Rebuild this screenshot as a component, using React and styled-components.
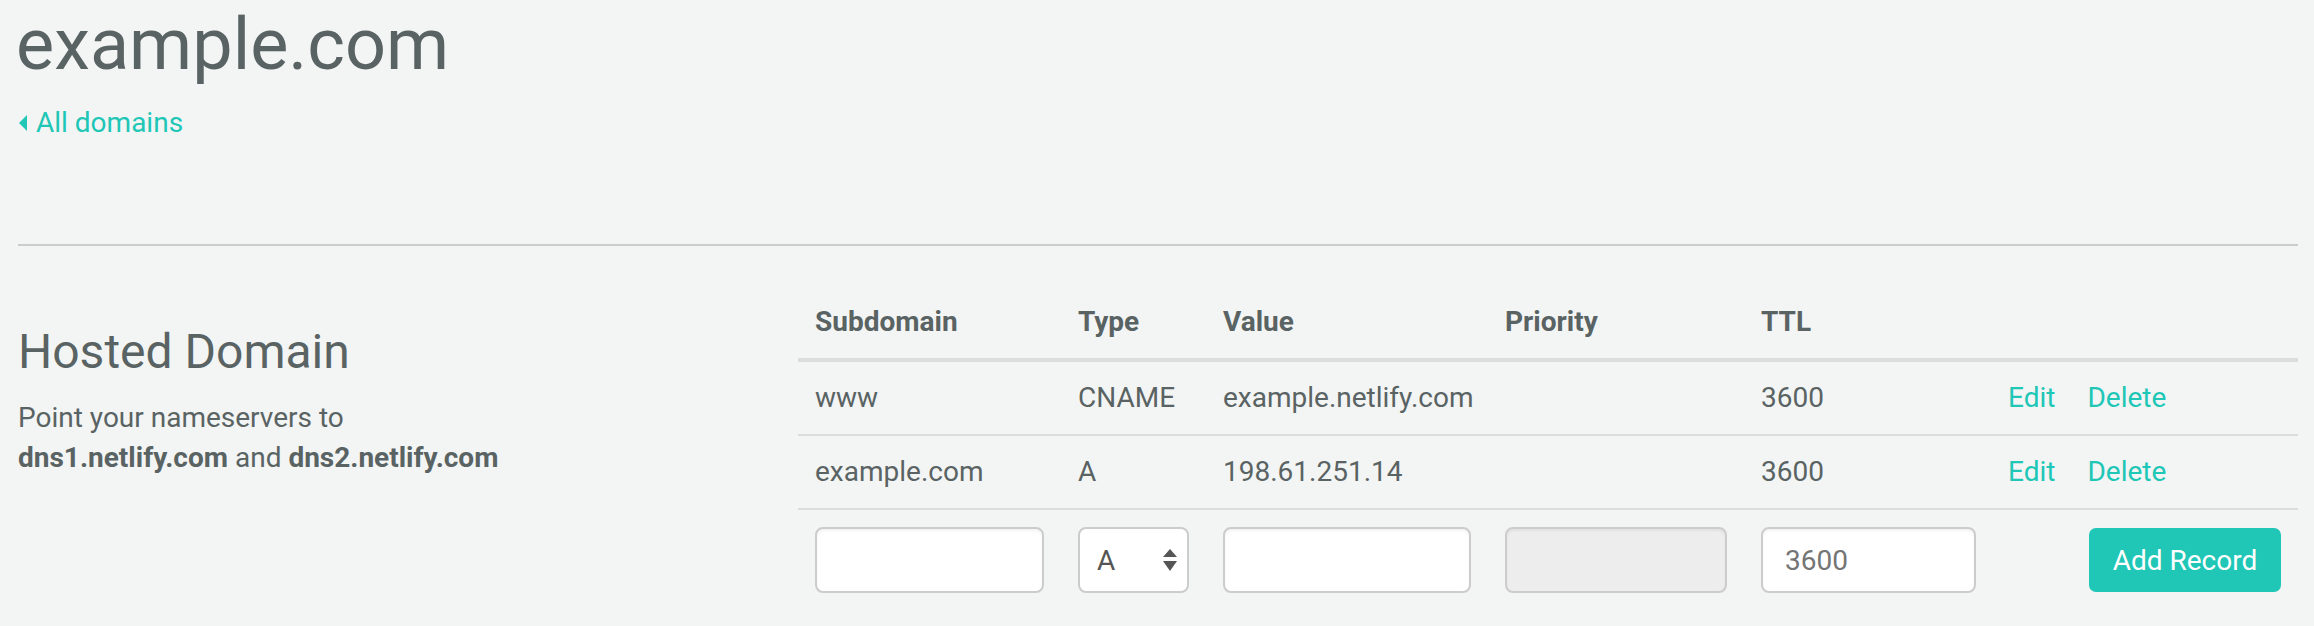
import React from 'react';
import styled, { createGlobalStyle } from 'styled-components';

const GlobalStyle = createGlobalStyle`
    body {
        margin: 0;
        background: #f3f5f4;
        font-family: Roboto, "Liberation Sans", sans-serif;
        color: #5a6363;
    }
`;

const Page = styled.div`
    padding: 2px 16px 0 18px;
`;

const Title = styled.h1`
    margin: 0 0 0 -2px;
    font-size: 72px;
    font-weight: 400;
    line-height: 86px;
    color: #5a6363;
`;

const BackLink = styled.a`
    display: inline-flex;
    align-items: center;
    gap: 9px;
    margin-top: 15px;
    font-size: 28px;
    line-height: 40px;
    color: #20c6b6;
    text-decoration: none;
    cursor: pointer;

    svg {
        margin-left: 1px;
    }
`;

const Divider = styled.hr`
    margin: 101px 0 0;
    border: 0;
    height: 2px;
    background: #cbcdcc;
`;

const Section = styled.section`
    display: grid;
    grid-template-columns: 780px 1fr;
    margin-top: 40px;
`;

const Intro = styled.div`
    padding-top: 38px;

    h2 {
        margin: 0;
        font-size: 48px;
        font-weight: 400;
        line-height: 56px;
    }

    p {
        margin: 18px 0 0;
        font-size: 28px;
        line-height: 40px;
    }

    strong {
        font-weight: 700;
    }
`;

const Table = styled.table`
    width: 100%;
    table-layout: fixed;
    border-collapse: collapse;
    font-size: 28px;
    line-height: 40px;

    th {
        padding: 16px 17px;
        text-align: left;
        font-weight: 700;
        border-bottom: 4px solid #dddddd;
    }

    td {
        padding: 16px 17px;
        border-bottom: 2px solid #dddddd;
        white-space: nowrap;
    }

    tr:last-child td {
        border-bottom: 0;
        padding-top: 17px;
        vertical-align: middle;
    }
`;

const Actions = styled.div`
    display: flex;
    gap: 32px;
    margin-left: -2px;

    a {
        color: #20c6b6;
        cursor: pointer;
    }
`;

const Field = styled.input`
    box-sizing: border-box;
    display: block;
    width: 100%;
    height: 66px;
    padding: 0 22px;
    border: 2px solid #cccccc;
    border-radius: 8px;
    background: ${(p) => (p.disabled ? '#ededed' : '#ffffff')};
    box-shadow: inset 0 2px 3px rgba(0, 0, 0, 0.05);
    font: 28px Roboto, "Liberation Sans", sans-serif;
    color: #757575;
`;

const SelectWrap = styled.div`
    position: relative;

    svg {
        position: absolute;
        right: 12px;
        top: 22px;
        pointer-events: none;
    }
`;

const Select = styled.select`
    box-sizing: border-box;
    display: block;
    width: 100%;
    height: 66px;
    padding: 0 17px;
    border: 2px solid #cccccc;
    border-radius: 8px;
    background: #ffffff;
    appearance: none;
    font: 28px Roboto, "Liberation Sans", sans-serif;
    color: #555555;
`;

const AddButton = styled.button`
    display: block;
    margin-left: auto;
    width: 192px;
    height: 64px;
    border: 0;
    border-radius: 7px;
    background: #20c6b6;
    color: #ffffff;
    font: 28px Roboto, "Liberation Sans", sans-serif;
    cursor: pointer;
`;

const records = [
    { name: 'www', type: 'CNAME', value: 'example.netlify.com', ttl: 3600 },
    { name: 'example.com', type: 'A', value: '198.61.251.14', ttl: 3600 },
];

const App = () => {
    return (
        <Page>
            <GlobalStyle />
            <Title>example.com</Title>
            <BackLink>
                <svg width="8" height="16" viewBox="0 0 8 16">
                    <path d="M8 0 L0 8 L8 16 Z" fill="#20c6b6" />
                </svg>
                All domains
            </BackLink>
            <Divider />
            <Section>
                <Intro>
                    <h2>Hosted Domain</h2>
                    <p>
                        Point your nameservers to<br />
                        <strong>dns1.netlify.com</strong> and <strong>dns2.netlify.com</strong>
                    </p>
                </Intro>
                <Table>
                    <colgroup>
                        <col style={{ width: 263 }} />
                        <col style={{ width: 145 }} />
                        <col style={{ width: 282 }} />
                        <col style={{ width: 256 }} />
                        <col style={{ width: 249 }} />
                        <col />
                    </colgroup>
                    <thead>
                        <tr>
                            <th>Subdomain</th>
                            <th>Type</th>
                            <th>Value</th>
                            <th>Priority</th>
                            <th>TTL</th>
                            <th></th>
                        </tr>
                    </thead>
                    <tbody>
                        {records.map((r) => (
                            <tr key={r.name}>
                                <td>{r.name}</td>
                                <td>{r.type}</td>
                                <td>{r.value}</td>
                                <td></td>
                                <td>{r.ttl}</td>
                                <td>
                                    <Actions>
                                        <a>Edit</a>
                                        <a>Delete</a>
                                    </Actions>
                                </td>
                            </tr>
                        ))}
                        <tr>
                            <td><Field /></td>
                            <td>
                                <SelectWrap>
                                    <Select defaultValue="A">
                                        <option>A</option>
                                        <option>CNAME</option>
                                        <option>MX</option>
                                    </Select>
                                    <svg width="14" height="22" viewBox="0 0 14 22">
                                        <path d="M7 0 L14 8 L0 8 Z" fill="#555" />
                                        <path d="M0 12 L14 12 L7 22 Z" fill="#555" />
                                    </svg>
                                </SelectWrap>
                            </td>
                            <td><Field /></td>
                            <td><Field disabled /></td>
                            <td><Field defaultValue="3600" /></td>
                            <td><AddButton>Add Record</AddButton></td>
                        </tr>
                    </tbody>
                </Table>
            </Section>
        </Page>
    );
};

export default App;
